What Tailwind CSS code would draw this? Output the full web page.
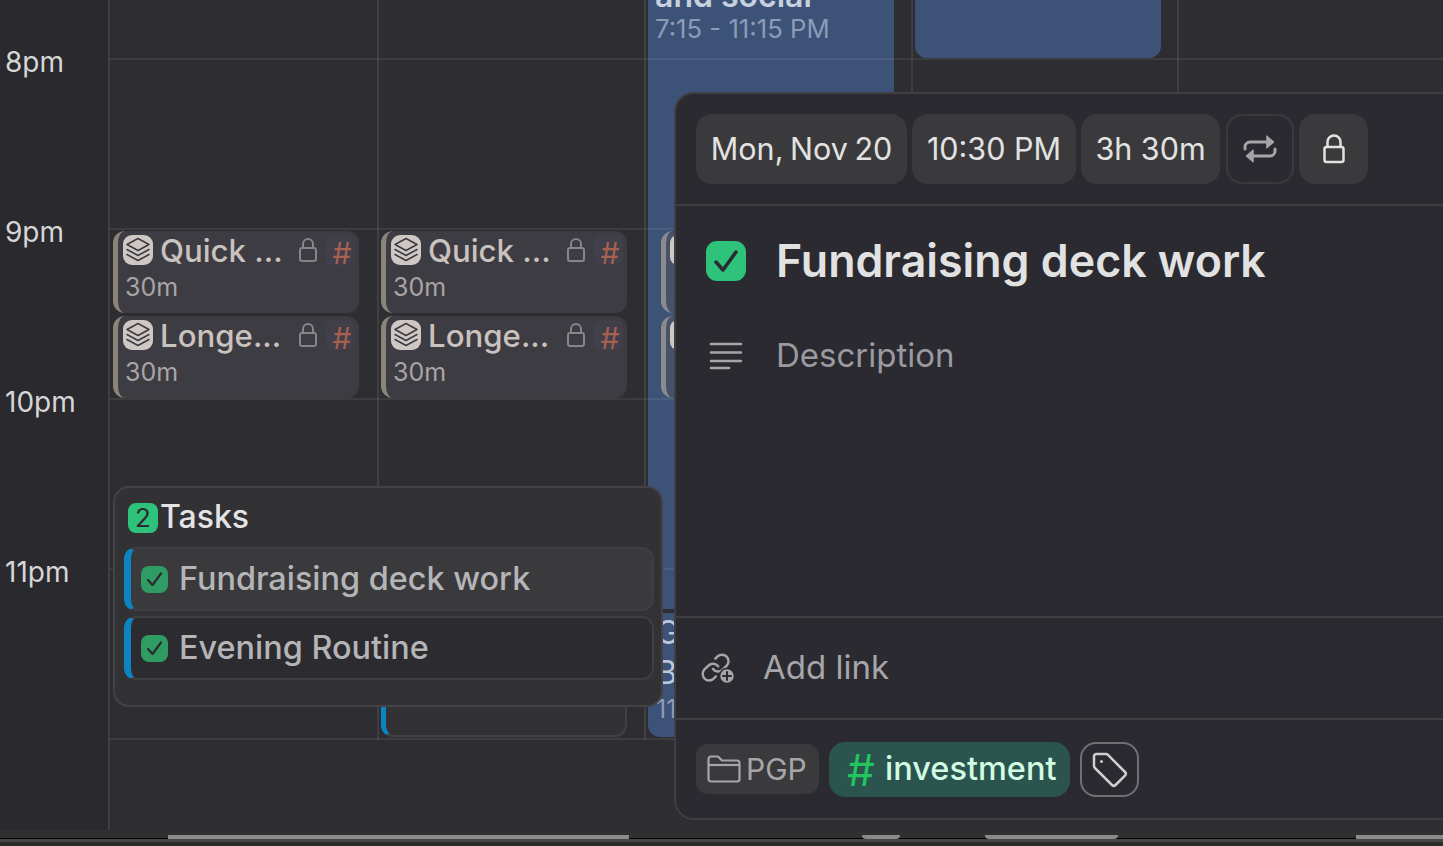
<!DOCTYPE html>
<html>
<head>
<meta charset="utf-8">
<script src="https://cdn.jsdelivr.net/npm/@tailwindcss/browser@4"></script>
</head>
<body class="m-0 bg-[#2f2f33]">
<div class="relative w-[1443px] h-[846px] overflow-hidden flex flex-col font-['Inter',sans-serif] bg-[#2e2e32]">
  <div class="flex h-[830px]">
    <!-- time gutter -->
    <div class="w-[110px] shrink-0 h-full border-r-2 border-[#3f3f43] bg-[#29292e] flex flex-col text-[28px] leading-[34px] text-[#d6d6d6] pl-[5px]">
      <div class="h-[45px] shrink-0"></div>
      <div class="h-[170px] shrink-0">8pm</div>
      <div class="h-[170px] shrink-0">9pm</div>
      <div class="h-[170px] shrink-0">10pm</div>
      <div class="h-[170px] shrink-0">11pm</div>
    </div>
    <!-- calendar -->
    <div class="flex-1 min-w-0">
      <div class="relative grid grid-cols-[269px_267px_267px_266px_1fr] h-[740px]">
        <!-- column 1 -->
        <div class="relative border-r-2 border-[#3f3f43]">
          <div class="absolute left-[3px] top-[231px] w-[246px] h-[82px] rounded-xl border-l-[5px] border-[#8b8479] bg-[#3e3c43] pl-[5px] pr-[4px] pt-[1px]">
            <div class="flex items-center h-[36px]">
              <svg class="w-[30px] h-[30px] shrink-0" viewBox="0 0 30 30"><rect width="30" height="30" rx="9" fill="#cfc7c3"/><g fill="none" stroke="#3b3a42" stroke-width="1.5" stroke-linejoin="round" stroke-linecap="round"><path d="M15 3.500 26 9.500 15 15.500 4 9.500Z"/><path d="M4 14.500 15 20.500 26 14.500"/><path d="M4 19.500 15 25.500 26 19.500"/></g></svg>
              <span class="ml-[7px] pt-[2px] flex-1 text-[31.2px] font-medium text-[#c9c2be] whitespace-nowrap leading-[36px]">Quick ...</span>
              <svg class="w-[18px] h-[26px] shrink-0 mr-[8px]" viewBox="0 0 18 26" fill="none" stroke="#85858a" stroke-width="2"><rect x="1" y="11" width="16" height="13" rx="2"/><path d="M4 11V7a5 5 0 0 1 10 0v4"/></svg>
              <span class="w-[30px] h-[30px] shrink-0 rounded-lg bg-[#413f49] text-center text-[30px] leading-[36px] text-[#a8604f] pl-[4px]">#</span>
            </div>
            <div class="text-[25px] leading-[32px] text-[#a8a4a6] pl-[2px] mt-[3px]">30m</div>
          </div>
          <div class="absolute left-[3px] top-[316px] w-[246px] h-[82px] rounded-xl border-l-[5px] border-[#8b8479] bg-[#3e3c43] pl-[5px] pr-[4px] pt-[1px]">
            <div class="flex items-center h-[36px]">
              <svg class="w-[30px] h-[30px] shrink-0" viewBox="0 0 30 30"><rect width="30" height="30" rx="9" fill="#cfc7c3"/><g fill="none" stroke="#3b3a42" stroke-width="1.5" stroke-linejoin="round" stroke-linecap="round"><path d="M15 3.500 26 9.500 15 15.500 4 9.500Z"/><path d="M4 14.500 15 20.500 26 14.500"/><path d="M4 19.500 15 25.500 26 19.500"/></g></svg>
              <span class="ml-[7px] pt-[2px] flex-1 text-[31.2px] font-medium text-[#c9c2be] whitespace-nowrap leading-[36px]">Longe...</span>
              <svg class="w-[18px] h-[26px] shrink-0 mr-[8px]" viewBox="0 0 18 26" fill="none" stroke="#85858a" stroke-width="2"><rect x="1" y="11" width="16" height="13" rx="2"/><path d="M4 11V7a5 5 0 0 1 10 0v4"/></svg>
              <span class="w-[30px] h-[30px] shrink-0 rounded-lg bg-[#413f49] text-center text-[30px] leading-[36px] text-[#a8604f] pl-[4px]">#</span>
            </div>
            <div class="text-[25px] leading-[32px] text-[#a8a4a6] pl-[2px] mt-[3px]">30m</div>
          </div>
        </div>
        <!-- column 2 -->
        <div class="relative border-r-2 border-[#3f3f43]">
          <div class="absolute left-[2px] top-[231px] w-[246px] h-[82px] rounded-xl border-l-[5px] border-[#8b8479] bg-[#3e3c43] pl-[5px] pr-[4px] pt-[1px]">
            <div class="flex items-center h-[36px]">
              <svg class="w-[30px] h-[30px] shrink-0" viewBox="0 0 30 30"><rect width="30" height="30" rx="9" fill="#cfc7c3"/><g fill="none" stroke="#3b3a42" stroke-width="1.5" stroke-linejoin="round" stroke-linecap="round"><path d="M15 3.500 26 9.500 15 15.500 4 9.500Z"/><path d="M4 14.500 15 20.500 26 14.500"/><path d="M4 19.500 15 25.500 26 19.500"/></g></svg>
              <span class="ml-[7px] pt-[2px] flex-1 text-[31.2px] font-medium text-[#c9c2be] whitespace-nowrap leading-[36px]">Quick ...</span>
              <svg class="w-[18px] h-[26px] shrink-0 mr-[8px]" viewBox="0 0 18 26" fill="none" stroke="#85858a" stroke-width="2"><rect x="1" y="11" width="16" height="13" rx="2"/><path d="M4 11V7a5 5 0 0 1 10 0v4"/></svg>
              <span class="w-[30px] h-[30px] shrink-0 rounded-lg bg-[#413f49] text-center text-[30px] leading-[36px] text-[#a8604f] pl-[4px]">#</span>
            </div>
            <div class="text-[25px] leading-[32px] text-[#a8a4a6] pl-[2px] mt-[3px]">30m</div>
          </div>
          <div class="absolute left-[2px] top-[316px] w-[246px] h-[82px] rounded-xl border-l-[5px] border-[#8b8479] bg-[#3e3c43] pl-[5px] pr-[4px] pt-[1px]">
            <div class="flex items-center h-[36px]">
              <svg class="w-[30px] h-[30px] shrink-0" viewBox="0 0 30 30"><rect width="30" height="30" rx="9" fill="#cfc7c3"/><g fill="none" stroke="#3b3a42" stroke-width="1.5" stroke-linejoin="round" stroke-linecap="round"><path d="M15 3.500 26 9.500 15 15.500 4 9.500Z"/><path d="M4 14.500 15 20.500 26 14.500"/><path d="M4 19.500 15 25.500 26 19.500"/></g></svg>
              <span class="ml-[7px] pt-[2px] flex-1 text-[31.2px] font-medium text-[#c9c2be] whitespace-nowrap leading-[36px]">Longe...</span>
              <svg class="w-[18px] h-[26px] shrink-0 mr-[8px]" viewBox="0 0 18 26" fill="none" stroke="#85858a" stroke-width="2"><rect x="1" y="11" width="16" height="13" rx="2"/><path d="M4 11V7a5 5 0 0 1 10 0v4"/></svg>
              <span class="w-[30px] h-[30px] shrink-0 rounded-lg bg-[#413f49] text-center text-[30px] leading-[36px] text-[#a8604f] pl-[4px]">#</span>
            </div>
            <div class="text-[25px] leading-[32px] text-[#a8a4a6] pl-[2px] mt-[3px]">30m</div>
          </div>
          <!-- event mostly hidden behind the tasks popover -->
          <div class="absolute left-[2px] top-[640px] w-[246px] h-[97px] rounded-xl border-2 border-l-[5px] border-[#414145] border-l-[#0d84c2] bg-[#323235]"></div>
        </div>
        <!-- column 3 -->
        <div class="relative border-r-2 border-[#3f3f43]">
          <div class="absolute left-[2px] -top-[40px] w-[246px] h-[649px] bg-[#3d5277] px-[7px] pt-[18px] overflow-hidden">
            <div class="text-[32px] leading-[36px] font-semibold text-[#c7d0de] whitespace-nowrap">and social</div>
            <div class="text-[25.7px] leading-[30px] text-[#8c9cb8] whitespace-nowrap">7:15 - 11:15 PM</div>
          </div>
          <div class="absolute left-[2px] top-[611px] w-[246px] h-[126px] rounded-b-xl bg-[#3d5277] border-t-2 border-[#2b2d33] pl-[8px] text-[#bcc7da] text-[32px] leading-[40px]">
            <div>G</div>
            <div>B</div>
            <div class="text-[25px] text-[#8c9cb8] leading-[32px]">11</div>
          </div>
          <div class="absolute left-[15px] top-[231px] w-[246px] h-[82px] rounded-xl border-l-[5px] border-[#8b8b8b] bg-[#46516a]">
            <div class="ml-[4px] mt-[4px] w-[30px] h-[30px] rounded-lg bg-[#cfc7c3]"></div>
          </div>
          <div class="absolute left-[15px] top-[316px] w-[246px] h-[82px] rounded-xl border-l-[5px] border-[#8b8b8b] bg-[#46516a]">
            <div class="ml-[4px] mt-[4px] w-[30px] h-[30px] rounded-lg bg-[#cfc7c3]"></div>
          </div>
        </div>
        <!-- column 4 -->
        <div class="relative border-r-2 border-[#3f3f43]">
          <div class="absolute left-[2px] -top-[40px] w-[246px] h-[98px] rounded-b-xl bg-[#3d5277]"></div>
        </div>
        <div></div>
        <!-- hour lines -->
        <div class="absolute inset-0 flex flex-col pointer-events-none">
          <div class="h-[60px] shrink-0 border-b-2 border-white/7"></div>
          <div class="h-[170px] shrink-0 border-b-2 border-white/7"></div>
          <div class="h-[170px] shrink-0 border-b-2 border-white/7"></div>
          <div class="h-[170px] shrink-0 border-b-2 border-white/7"></div>
          <div class="h-[170px] shrink-0 border-b-2 border-white/7"></div>
        </div>
      </div>
    </div>
  </div>

  <!-- bottom scrollbar -->
  <div class="relative h-[16px] bg-[#303032]">
    <div class="absolute left-0 right-0 top-[8px] h-px bg-black"></div>
    <div class="absolute left-0 right-0 top-[9px] h-[3px] bg-[#464646]"></div>
    <div class="absolute left-0 right-0 top-[12px] h-[4px] bg-[#2b2b2b]"></div>
    <div class="absolute left-[168px] w-[461px] top-[5px] h-[4px] bg-[#8a8a8a]"></div>
    <div class="absolute left-[862px] w-[38px] top-[5px] h-[4px] rounded-b bg-[#8a8a8a]"></div>
    <div class="absolute left-[985px] w-[133px] top-[5px] h-[4px] rounded-b bg-[#8a8a8a]"></div>
    <div class="absolute left-[1356px] w-[87px] top-[5px] h-[4px] bg-[#8a8a8a]"></div>
  </div>

  <!-- tasks popover -->
  <div class="absolute left-[113px] top-[486px] w-[550px] h-[221px] rounded-2xl border-2 border-[#434347] bg-[#323235] pl-[9px] pr-[7px]">
    <div class="flex items-center h-[59px] pl-[4px]">
      <span class="w-[30px] h-[30px] rounded-lg bg-[#2ec27a] text-center text-[26px] leading-[30px] text-[#2b2b30]">2</span>
      <span class="ml-[2px] pb-[2px] text-[32px] font-medium text-[#e4e4e6] leading-[36px]">Tasks</span>
    </div>
    <div class="flex items-center h-[64px] rounded-xl border-2 border-l-[7px] border-[#3f3f43] border-l-[#0d84c2] bg-[#3a3a3d] pl-[10px]">
      <svg class="w-[27px] h-[27px] shrink-0" viewBox="0 0 27 27"><rect width="27" height="27" rx="8" fill="#2f9c64"/><path d="M7 14l4.500 5L20 7.500" fill="none" stroke="#2b2b30" stroke-width="2.200" stroke-linecap="round" stroke-linejoin="round"/></svg>
      <span class="ml-[11px] text-[32.4px] font-medium text-[#b5b5b8] whitespace-nowrap">Fundraising deck work</span>
    </div>
    <div class="flex items-center h-[64px] mt-[5px] rounded-xl border-2 border-l-[7px] border-[#3f3f43] border-l-[#0d84c2] bg-[#2b2b30] pl-[10px]">
      <svg class="w-[27px] h-[27px] shrink-0" viewBox="0 0 27 27"><rect width="27" height="27" rx="8" fill="#2f9c64"/><path d="M7 14l4.500 5L20 7.500" fill="none" stroke="#2b2b30" stroke-width="2.200" stroke-linecap="round" stroke-linejoin="round"/></svg>
      <span class="ml-[11px] text-[32.4px] font-medium text-[#b5b5b8] whitespace-nowrap">Evening Routine</span>
    </div>
  </div>

  <!-- event detail panel -->
  <div class="absolute left-[674px] top-[92px] w-[800px] h-[728px] rounded-[20px] border-2 border-[#3f3f43] bg-[#2a2a30] flex flex-col">
    <div class="h-[112px] shrink-0 border-b-2 border-[#3f3f43] flex items-start pt-[20px] pl-[20px] gap-[5px] text-[30.5px] text-[#e2e2e2]">
      <div class="h-[70px] w-[211px] rounded-2xl bg-[#3a3a3c] flex items-center justify-center [word-spacing:-2px]">Mon, Nov 20</div>
      <div class="h-[70px] w-[164px] rounded-2xl bg-[#3a3a3c] flex items-center justify-center">10:30 PM</div>
      <div class="h-[70px] w-[139px] rounded-2xl bg-[#3a3a3c] flex items-center justify-center">3h 30m</div>
      <div class="h-[70px] w-[68px] ml-px rounded-2xl border-2 border-[#3a3a3e] flex items-center justify-center">
        <svg class="w-[34px] h-[30px]" viewBox="0 0 34 30" fill="none" stroke="#a6a6a9" stroke-width="3" stroke-linecap="round" stroke-linejoin="round"><path d="M2 15v-2a5 5 0 0 1 5-5h20"/><path d="M32 15v2a5 5 0 0 1-5 5H8"/><path d="M24 2l7 6-7 6Z" fill="#a6a6a9" stroke-width="1"/><path d="M10 16l-7 6 7 6Z" fill="#a6a6a9" stroke-width="1"/></svg>
      </div>
      <div class="h-[70px] w-[69px] rounded-2xl bg-[#3a3a3c] flex items-center justify-center">
        <svg class="w-[22px] h-[30px]" viewBox="0 0 22 30" fill="none" stroke="#e2e2e2" stroke-width="2.500" stroke-linejoin="round"><rect x="1.500" y="13" width="19" height="15" rx="2"/><path d="M4.500 13V8a6.500 6.500 0 0 1 13 0v5"/></svg>
      </div>
    </div>
    <div class="h-[412px] shrink-0 border-b-2 border-[#3f3f43] pl-[29px]">
      <div class="flex items-center h-[110px]">
        <svg class="w-[42px] h-[42px] shrink-0" viewBox="0 0 42 42"><rect x="1" y="1" width="40" height="40" rx="11" fill="#2ec27a"/><path d="M11 22l7 8L31 12" fill="none" stroke="#2a2a30" stroke-width="3.500" stroke-linecap="round" stroke-linejoin="round"/></svg>
        <span class="ml-[29px] pt-[2px] text-[44.7px] font-semibold text-[#e2e2e2] whitespace-nowrap">Fundraising deck work</span>
      </div>
      <div class="flex items-center h-[78px] mt-[1px]">
        <svg class="w-[34px] h-[30px] ml-[4px] shrink-0" viewBox="0 0 34 30" stroke="#a6a6a9" stroke-width="2.500" stroke-linecap="round"><path d="M2 3h30M2 11.500h30M2 20h30M2 27h18"/></svg>
        <span class="ml-[33px] text-[33px] text-[#9a9aa0]">Description</span>
      </div>
    </div>
    <div class="h-[102px] shrink-0 border-b-2 border-[#3f3f43] flex items-center pl-[24px]">
      <svg class="w-[36px] h-[34px] shrink-0" viewBox="0 0 36 34" fill="none" stroke="#a6a6a9" stroke-width="2.500" stroke-linecap="round" stroke-linejoin="round"><g transform="translate(0 1) scale(1.3)"><path d="M10 13a5 5 0 0 0 7.540.540l3-3a5 5 0 0 0-7.070-7.070l-1.720 1.710" stroke-width="1.900"/><path d="M14 11a5 5 0 0 0-7.540-.540l-3 3a5 5 0 0 0 7.070 7.070l1.710-1.710" stroke-width="1.900"/></g><circle cx="27" cy="25" r="7.500" fill="#a6a6a9" stroke="#2a2a30" stroke-width="1.500"/><path d="M27 21v8M23 25h8" stroke="#2a2a30" stroke-width="2"/></svg>
      <span class="ml-[27px] text-[33px] text-[#a6a6aa]">Add link</span>
    </div>
    <div class="flex-1 flex items-start pl-[20px] pt-[22px]">
      <div class="h-[50px] w-[123px] mt-[2px] rounded-xl bg-[#3a3a3c] flex items-center pl-[11px] text-[30px] text-[#a6a6a9]">
        <svg class="w-[34px] h-[28px] shrink-0" viewBox="0 0 34 28" fill="none" stroke="#a6a6a9" stroke-width="2.200" stroke-linejoin="round"><path d="M1.500 24V4a2.500 2.500 0 0 1 2.500-2.500h7l4 4h15a2.500 2.500 0 0 1 2.500 2.500v16a2.500 2.500 0 0 1-2.500 2.500H4A2.500 2.500 0 0 1 1.500 24Z"/><path d="M1.500 10h31"/></svg>
        <span class="ml-[5px]">PGP</span>
      </div>
      <div class="h-[55px] w-[241px] ml-[10px] rounded-2xl bg-[#2b544f] flex items-center pl-[17px] text-[32.5px] font-medium text-[#d2fbe3]">
        <span class="text-[#22c55e] text-[44px] font-normal leading-[44px] w-[30px] text-center">#</span>
        <span class="ml-[9px]">investment</span>
      </div>
      <div class="h-[55px] w-[59px] ml-[10px] rounded-2xl border-2 border-[#707075] flex items-center justify-center">
        <svg class="w-[38px] h-[38px]" viewBox="0 0 38 38" fill="none" stroke="#cfcfd2" stroke-width="2.500" stroke-linejoin="round"><path d="M3 5.500A2.500 2.500 0 0 1 5.500 3H15a3 3 0 0 1 2 .9L34 21a2.500 2.500 0 0 1 0 3.500L24.500 34a2.500 2.500 0 0 1-3.500 0L3.900 17a3 3 0 0 1-.9-2Z"/><circle cx="10.500" cy="10.500" r="1.500" fill="#cfcfd2" stroke="none"/></svg>
      </div>
    </div>
  </div>
</div>
</body>
</html>
